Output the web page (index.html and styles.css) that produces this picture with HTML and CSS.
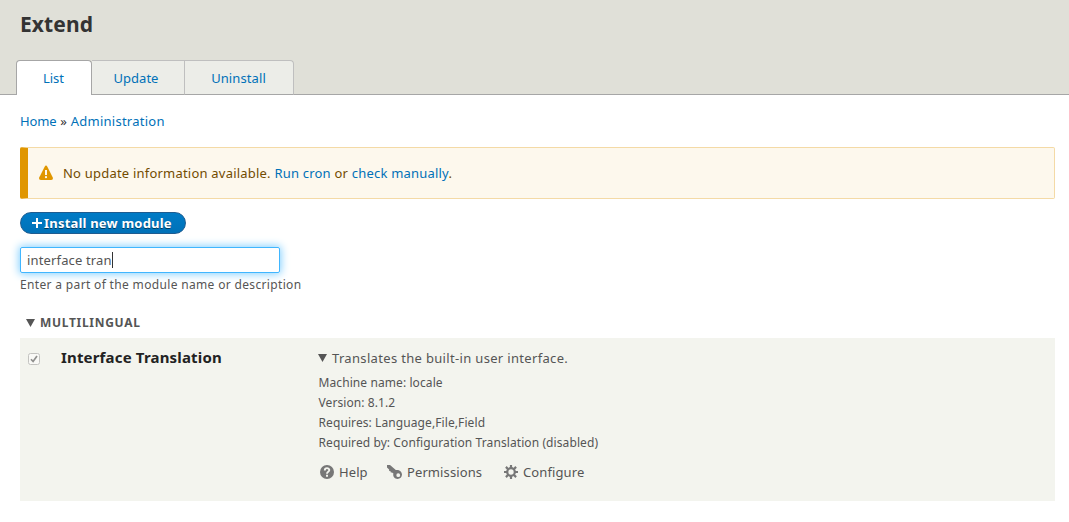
FILE: index.html
```html
<!DOCTYPE html>
<html lang="en">
<head>
<meta charset="utf-8">
<title>Extend</title>
<link rel="stylesheet" href="styles.css">
</head>
<body>
<header class="page-header">
  <h1 class="page-title"><span>Extend</span></h1>
  <nav class="tabs">
    <a class="tab tab-active"><span>List</span></a>
    <a class="tab tab-update"><span>Update</span></a>
    <a class="tab tab-uninstall"><span>Uninstall</span></a>
  </nav>
</header>
<main class="content">
  <nav class="breadcrumb"><a class="crumb-home">Home</a> » <a>Administration</a></nav>
  <div class="message">
    <svg class="warn-icon" width="16" height="16" viewBox="0 0 16 16"><path fill="#e09600" d="M14.66 12.316l-5.316-10.633c-.738-1.476-1.946-1.476-2.685 0l-5.317 10.633c-.738 1.477.008 2.684 1.658 2.684h10.002c1.65 0 2.396-1.207 1.658-2.684z"/><path fill="#fdf8ed" d="M7 5h2v5h-2zM8 13.3a1.1 1.1 0 1 1 0-2.2 1.1 1.1 0 0 1 0 2.2z"/></svg>
    <span class="message-text">No update information available. <a>Run cron</a> or <a>check manually</a>.</span>
  </div>
  <a class="button"><svg class="plus" width="10" height="10" viewBox="0 0 10 10"><path d="M5 0v10M0 5h10" stroke="#fff" stroke-width="2"/></svg><span>Install new module</span></a>
  <div class="search"><span class="search-value">interface tran</span><span class="caret"></span></div>
  <div class="description">Enter a part of the module name or description</div>
  <h2 class="group"><svg width="9" height="8" viewBox="0 0 9 8"><path d="M0 0h9L4.5 8z" fill="#555"/></svg><span>MULTILINGUAL</span></h2>
  <section class="module">
    <svg class="checkbox" width="12" height="12" viewBox="0 0 12 12"><rect x=".5" y=".5" width="11" height="11" rx="2" fill="#f9f9f6" stroke="#c3c3c0"/><path d="M3 6.2l2.1 2.3L9 3" fill="none" stroke="#8f8f8d" stroke-width="1.7"/></svg>
    <div class="module-name"><span>Interface Translation</span></div>
    <div class="details">
      <div class="summary"><svg width="9" height="8" viewBox="0 0 9 8"><path d="M0 0h9L4.5 8z" fill="#555"/></svg><span>Translates the built-in user interface.</span></div>
      <div class="requirements">
        <div>Machine name: locale</div>
        <div>Version: 8.1.2</div>
        <div>Requires: Language,File,Field</div>
        <div>Required by: Configuration Translation (disabled)</div>
      </div>
      <div class="links">
        <a class="link link-help"><svg width="14" height="14" viewBox="0 0 14 14"><circle cx="7" cy="7" r="7" fill="#777"/><path d="M4.8 5.4C4.8 2.4 9.3 2.5 9.3 5.1 9.3 6.8 7 6.7 7 8.7" fill="none" stroke="#f3f4ee" stroke-width="1.9"/><path d="M6 9.7h2v2H6z" fill="#f3f4ee"/></svg><span>Help</span></a>
        <a class="link link-perm"><svg width="15" height="14" viewBox="0 0 15 14"><path fill="#777" fill-rule="evenodd" d="M0 0h3l5.8 5.1c3-.8 6.2 1.5 6.2 4.5 0 2.6-2 4.4-4.4 4.4-3 0-5-2.7-4.2-5.4L5 7.5l-1.2.1-.2-1.4-1.4-.1-.1-1.5L0 2.4zM11.2 8.3a1.9 1.9 0 1 0 .1 3.8 1.9 1.9 0 0 0-.1-3.8z"/></svg><span>Permissions</span></a>
        <a class="link link-conf"><svg width="14" height="14" viewBox="0 0 14 14"><g fill="none" stroke="#777"><circle cx="7" cy="7" r="3.8" stroke-width="2.2"/><path stroke-width="2.2" d="M7 0v3M7 11v3M0 7h3M11 7h3M1.9 1.9l2.1 2.1M10 10l2.1 2.1M1.9 12.1l2.1-2.1M10 4l2.1-2.1"/></g></svg><span>Configure</span></a>
      </div>
    </div>
  </section>
</main>
</body>
</html>
```
FILE: styles.css
```css
* { box-sizing: border-box; }
body {
  margin: 0;
  background: #fff;
  color: #555;
  font: 13px/20px "Noto Sans", "Open Sans", sans-serif;
}
svg { display: block; flex: none; }
span { white-space: nowrap; }
a { color: #0071b8; text-decoration: none; }
.page-header {
  display: flex;
  flex-direction: column;
  justify-content: space-between;
  height: 95px;
  background: #e0e0d8;
  box-shadow: inset 0 -1px #a6a6a6;
}
.page-title {
  margin: 0;
  padding: 9px 0 0 20px;
  color: #333;
  font-size: 21px;
  line-height: 30px;
  letter-spacing: .1px;
}
.tabs { display: flex; padding-left: 16px; height: 35px; }
.tab {
  display: flex;
  align-items: center;
  justify-content: center;
  height: 35px;
  padding-top: 1px;
  background: #ecede8;
  border: 1px solid #bfbfbf;
  border-left: 0;
  border-bottom-color: #a6a6a6;
}
.tab-active {
  width: 76px;
  padding: 0 1px 0 0;
  background: #fff;
  border: 1px solid #a6a6a6;
  border-bottom: 0;
  border-radius: 4px 4px 0 0;
}
.tab-update { width: 93px; padding-right: 4px; }
.tab-uninstall { width: 109px; padding-right: 1px; border-radius: 0 4px 0 0; letter-spacing: .1px; }
.content { padding: 16px 14px 0 20px; }
.breadcrumb { height: 20px; color: #333; letter-spacing: .25px; }
.crumb-home { letter-spacing: -.1px; }
.message {
  display: flex;
  align-items: center;
  height: 52px;
  margin-top: 16px;
  padding-left: 10px;
  background: #fdf8ed;
  border: 1px solid #f4daa6;
  border-left: 8px solid #e09600;
  border-radius: 2px;
  color: #734c00;
}
.message-text { margin-left: 9px; letter-spacing: .21px; }
.button {
  display: flex;
  align-items: center;
  width: 166px;
  height: 22px;
  margin-top: 13px;
  padding-left: 11px;
  gap: 2px;
  border: 1px solid #1e5c90;
  border-radius: 11px;
  background: linear-gradient(#007bc6, #0071b8);
  color: #fff;
  font-weight: 700;
  letter-spacing: .2px;
  text-shadow: 0 1px rgba(0, 0, 0, .5);
}
.search {
  display: flex;
  align-items: center;
  width: 260px;
  height: 26px;
  margin-top: 13px;
  padding-left: 6px;
  border: 1px solid #40b6ff;
  border-radius: 2px;
  box-shadow: 0 0 8px 1px #80cfff;
  letter-spacing: .15px;
}
.caret { width: 1px; height: 16px; background: #333; }
.description { margin-top: 2px; font-size: 12px; letter-spacing: .34px; }
.group {
  display: flex;
  align-items: center;
  gap: 5px;
  height: 20px;
  margin: 18px 0 0;
  padding-left: 6px;
  font-size: 12px;
  font-weight: 700;
  letter-spacing: .7px;
}
.module {
  display: grid;
  grid-template-columns: 33px 257px 1fr;
  height: 163px;
  margin-top: 5px;
  padding: 10px 0 0 8px;
  background: #f3f4ee;
}
.checkbox { margin-top: 5px; }
.module-name { margin-top: -1px; color: #222; font-size: 15px; font-weight: 700; letter-spacing: .17px; }
.summary { display: flex; align-items: center; gap: 5px; height: 20px; letter-spacing: .33px; }
.requirements { margin-top: 5px; padding-left: .5px; font-size: 12px; letter-spacing: .09px; }
.links { display: flex; margin-top: 9px; padding-left: 2px; }
.link { display: flex; align-items: center; gap: 5px; height: 20px; color: #555; letter-spacing: .1px; }
.link-help { width: 67px; }
.link-perm { width: 117px; }
```
